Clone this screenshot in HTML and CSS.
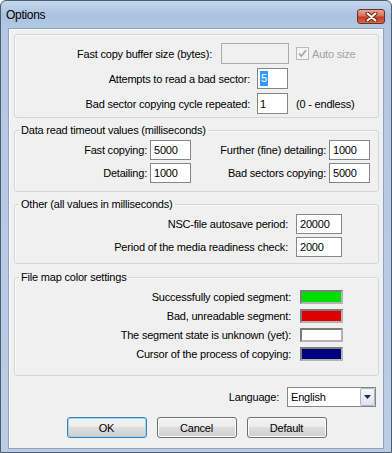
FILE: index.html
```html
<!DOCTYPE html>
<html lang="en">
<head>
<meta charset="UTF-8">
<meta name="viewport" content="width=device-width, initial-scale=1.0">
<title>Options</title>
<link rel="stylesheet" href="styles.css">
</head>
<body>
<div class="window">
    <div class="titlebar">
        <span class="title">Options</span>
        <button class="close-btn" aria-label="Close">
            <svg width="13" height="10" viewBox="0 0 13 10">
                <path d="M2.5 1.5 L10.5 8.5 M10.5 1.5 L2.5 8.5" stroke="#6b2418" stroke-width="4" stroke-linecap="round"/>
                <path d="M2.5 1.5 L10.5 8.5 M10.5 1.5 L2.5 8.5" stroke="#fff" stroke-width="2" stroke-linecap="round"/>
            </svg>
        </button>
    </div>

    <div class="client">
        <fieldset class="group group-copy">
            <div class="row">
                <label class="lbl lbl-buffer" for="buffer">Fast copy buffer size (bytes):</label>
                <input class="field field-buffer" type="text" id="buffer" disabled>
                <span class="check">
                    <svg width="13" height="13" viewBox="0 0 13 13">
                        <rect x="0.5" y="0.5" width="12" height="12" fill="#f4f4f4" stroke="#b9b9b9"/>
                        <path d="M3 6.5 L5.3 9 L10 3.2" stroke="#a8a8a8" stroke-width="1.8" fill="none"/>
                    </svg>
                </span>
                <span class="muted">Auto size</span>
            </div>
            <div class="row">
                <label class="lbl lbl-wide">Attempts to read a bad sector:</label>
                <div class="field field-small"><span class="sel">5</span></div>
            </div>
            <div class="row">
                <label class="lbl lbl-wide" for="cycle">Bad sector copying cycle repeated:</label>
                <input class="field field-small" type="text" id="cycle" value="1">
                <span class="note">(0 - endless)</span>
            </div>
        </fieldset>

        <fieldset class="group">
            <legend>Data read timeout values (milliseconds)</legend>
            <div class="grid timeouts">
                <label class="lbl">Fast copying:</label>
                <input class="field" type="text" value="5000">
                <label class="lbl">Further (fine) detailing:</label>
                <input class="field" type="text" value="1000">
                <label class="lbl">Detailing:</label>
                <input class="field" type="text" value="1000">
                <label class="lbl">Bad sectors copying:</label>
                <input class="field" type="text" value="5000">
            </div>
        </fieldset>

        <fieldset class="group">
            <legend>Other (all values in milliseconds)</legend>
            <div class="grid other">
                <label class="lbl">NSC-file autosave period:</label>
                <input class="field" type="text" value="20000">
                <label class="lbl">Period of the media readiness check:</label>
                <input class="field" type="text" value="2000">
            </div>
        </fieldset>

        <fieldset class="group group-colors">
            <legend>File map color settings</legend>
            <div class="grid colors">
                <span class="lbl">Successfully copied segment:</span>
                <span class="swatch" style="background-color: #00de00;"></span>
                <span class="lbl">Bad, unreadable segment:</span>
                <span class="swatch" style="background-color: #de0000;"></span>
                <span class="lbl">The segment state is unknown (yet):</span>
                <span class="swatch" style="background-color: #ffffff;"></span>
                <span class="lbl">Cursor of the process of copying:</span>
                <span class="swatch" style="background-color: #000080;"></span>
            </div>
        </fieldset>

        <div class="lang-row">
            <label>Language:</label>
            <div class="combo">
                <span class="combo-text">English</span>
                <span class="combo-btn">
                    <svg width="7" height="4" viewBox="0 0 7 4"><path d="M0 0 H7 L3.5 4 Z" fill="#1d2a4a"/></svg>
                </span>
            </div>
        </div>

        <div class="buttons">
            <button class="btn btn-default">OK</button>
            <button class="btn">Cancel</button>
            <button class="btn">Default</button>
        </div>
    </div>
</div>
</body>
</html>
```

FILE: styles.css
```css
body {
    margin: 0;
    font-family: "Liberation Sans", Arial, sans-serif;
    font-size: 11px;
    letter-spacing: -0.2px;
    color: #000;
    background-color: #fff;
}

.window {
    width: 392px;
    height: 453px;
    box-sizing: border-box;
    display: flex;
    flex-direction: column;
    border: 1px solid #4d5d72;
    border-radius: 6px 6px 0 0;
    background: linear-gradient(to bottom, #c4d6ec 0, #abc3e0 14px, #b2c8e3 27px, #b9cde6 100%);
}

.titlebar {
    height: 27px;
    flex: none;
    display: flex;
    align-items: flex-start;
    justify-content: space-between;
}

.title {
    margin: 7px 0 0 5px;
    font-size: 12px;
    letter-spacing: -0.3px;
    line-height: 15px;
}

.close-btn {
    width: 28px;
    height: 15px;
    margin: 8px 6px 0 0;
    padding: 0;
    border: 1px solid #6b2f27;
    border-radius: 3px;
    background: linear-gradient(to bottom, #eba596 0%, #d9705d 45%, #c23a22 55%, #d8664c 100%);
    display: flex;
    align-items: center;
    justify-content: center;
}

.client {
    flex: 1;
    margin: 0 7px 3px;
    padding: 5px 4px 0 5px;
    background-color: #f0f0f0;
    border: 1px solid #8ea3bf;
    box-shadow: inset 1px 1px 0 #fafcff;
}

.group {
    margin: 6px 0 0;
    padding: 0;
    min-width: 0;
    border: 1px solid #d2d6d9;
    border-radius: 3px;
    box-shadow: inset 1px 1px 0 #fbfbfb;
}

.group-copy {
    margin-top: 0;
    padding: 8px 0 3px;
}

.group + .group {
    margin-top: 6px;
}

.group + .group-colors {
    margin-top: 7px;
}

.group legend {
    margin-left: 4px;
    padding: 0 2px;
    line-height: 13px;
}

.lbl {
    text-align: right;
    white-space: nowrap;
}

.field {
    box-sizing: border-box;
    height: 20px;
    margin: 0;
    padding: 0 3px;
    border: 1px solid #848789;
    background-color: #fff;
    font-family: inherit;
    font-size: 11px;
    letter-spacing: -0.2px;
    color: #000;
    outline: none;
}

.field:disabled {
    background-color: #f0f0f0;
    border-color: #a9abad;
}

.row {
    display: flex;
    align-items: center;
    height: 21px;
}

.row + .row {
    margin-top: 4px;
}

.row .field {
    height: 21px;
}

.lbl-buffer {
    width: 197px;
    margin-right: 9px;
}

.field-buffer {
    width: 68px;
}

.check {
    display: flex;
    margin: 0 3px 0 7px;
}

.muted {
    color: #a3a3a3;
}

.lbl-wide {
    width: 235px;
    margin-right: 7px;
}

.field-small {
    width: 31px;
    display: flex;
    align-items: center;
    padding-left: 2px;
}

.sel {
    background-color: #3399ff;
    color: #fff;
    line-height: 15px;
    padding: 0 1px;
}

.note {
    margin-left: 8px;
}

.grid {
    display: grid;
    align-items: center;
}

.timeouts {
    grid-template-columns: 132px 41px 132px 41px;
    grid-auto-rows: 20px;
    gap: 3px;
    padding: 3px 0 8px;
}

.other {
    grid-template-columns: 273px 46px;
    grid-auto-rows: 20px;
    column-gap: 8px;
    row-gap: 3px;
    padding: 3px 0 6px;
}

.colors {
    grid-template-columns: 276px 43px;
    grid-auto-rows: 19px;
    column-gap: 9px;
    padding: 3px 0 12px;
}

.swatch {
    box-sizing: border-box;
    height: 14px;
    border: 2px solid;
    border-color: #7c7c7c #b3b3b3 #b3b3b3 #7c7c7c;
}

.lang-row {
    display: flex;
    justify-content: flex-end;
    align-items: center;
    gap: 8px;
    margin: 11px 3px 0 0;
}

.combo {
    box-sizing: border-box;
    width: 89px;
    height: 20px;
    display: flex;
    align-items: center;
    justify-content: space-between;
    padding: 0 0 0 3px;
    border: 1px solid #848789;
    background-color: #fff;
}

.combo-btn {
    box-sizing: border-box;
    width: 15px;
    height: 18px;
    display: flex;
    align-items: center;
    justify-content: center;
    border: 1px solid #aab4c4;
    border-radius: 2px;
    background: linear-gradient(to bottom, #f6f7f9, #dfe3ea);
}

.buttons {
    display: flex;
    justify-content: center;
    gap: 10px;
    margin-top: 10px;
}

.btn {
    width: 80px;
    height: 21px;
    padding: 0;
    border: 1px solid #707070;
    border-radius: 3px;
    background: linear-gradient(to bottom, #f2f2f2 0%, #ebebeb 50%, #dddddd 50%, #cfcfcf 100%);
    box-shadow: inset 0 0 0 1px #fbfbfb;
    font-family: inherit;
    font-size: 11px;
    letter-spacing: -0.2px;
    color: #000;
}

.btn-default {
    border-color: #3c7fb1;
    box-shadow: inset 0 0 0 1px #9fd6f5;
}
```
